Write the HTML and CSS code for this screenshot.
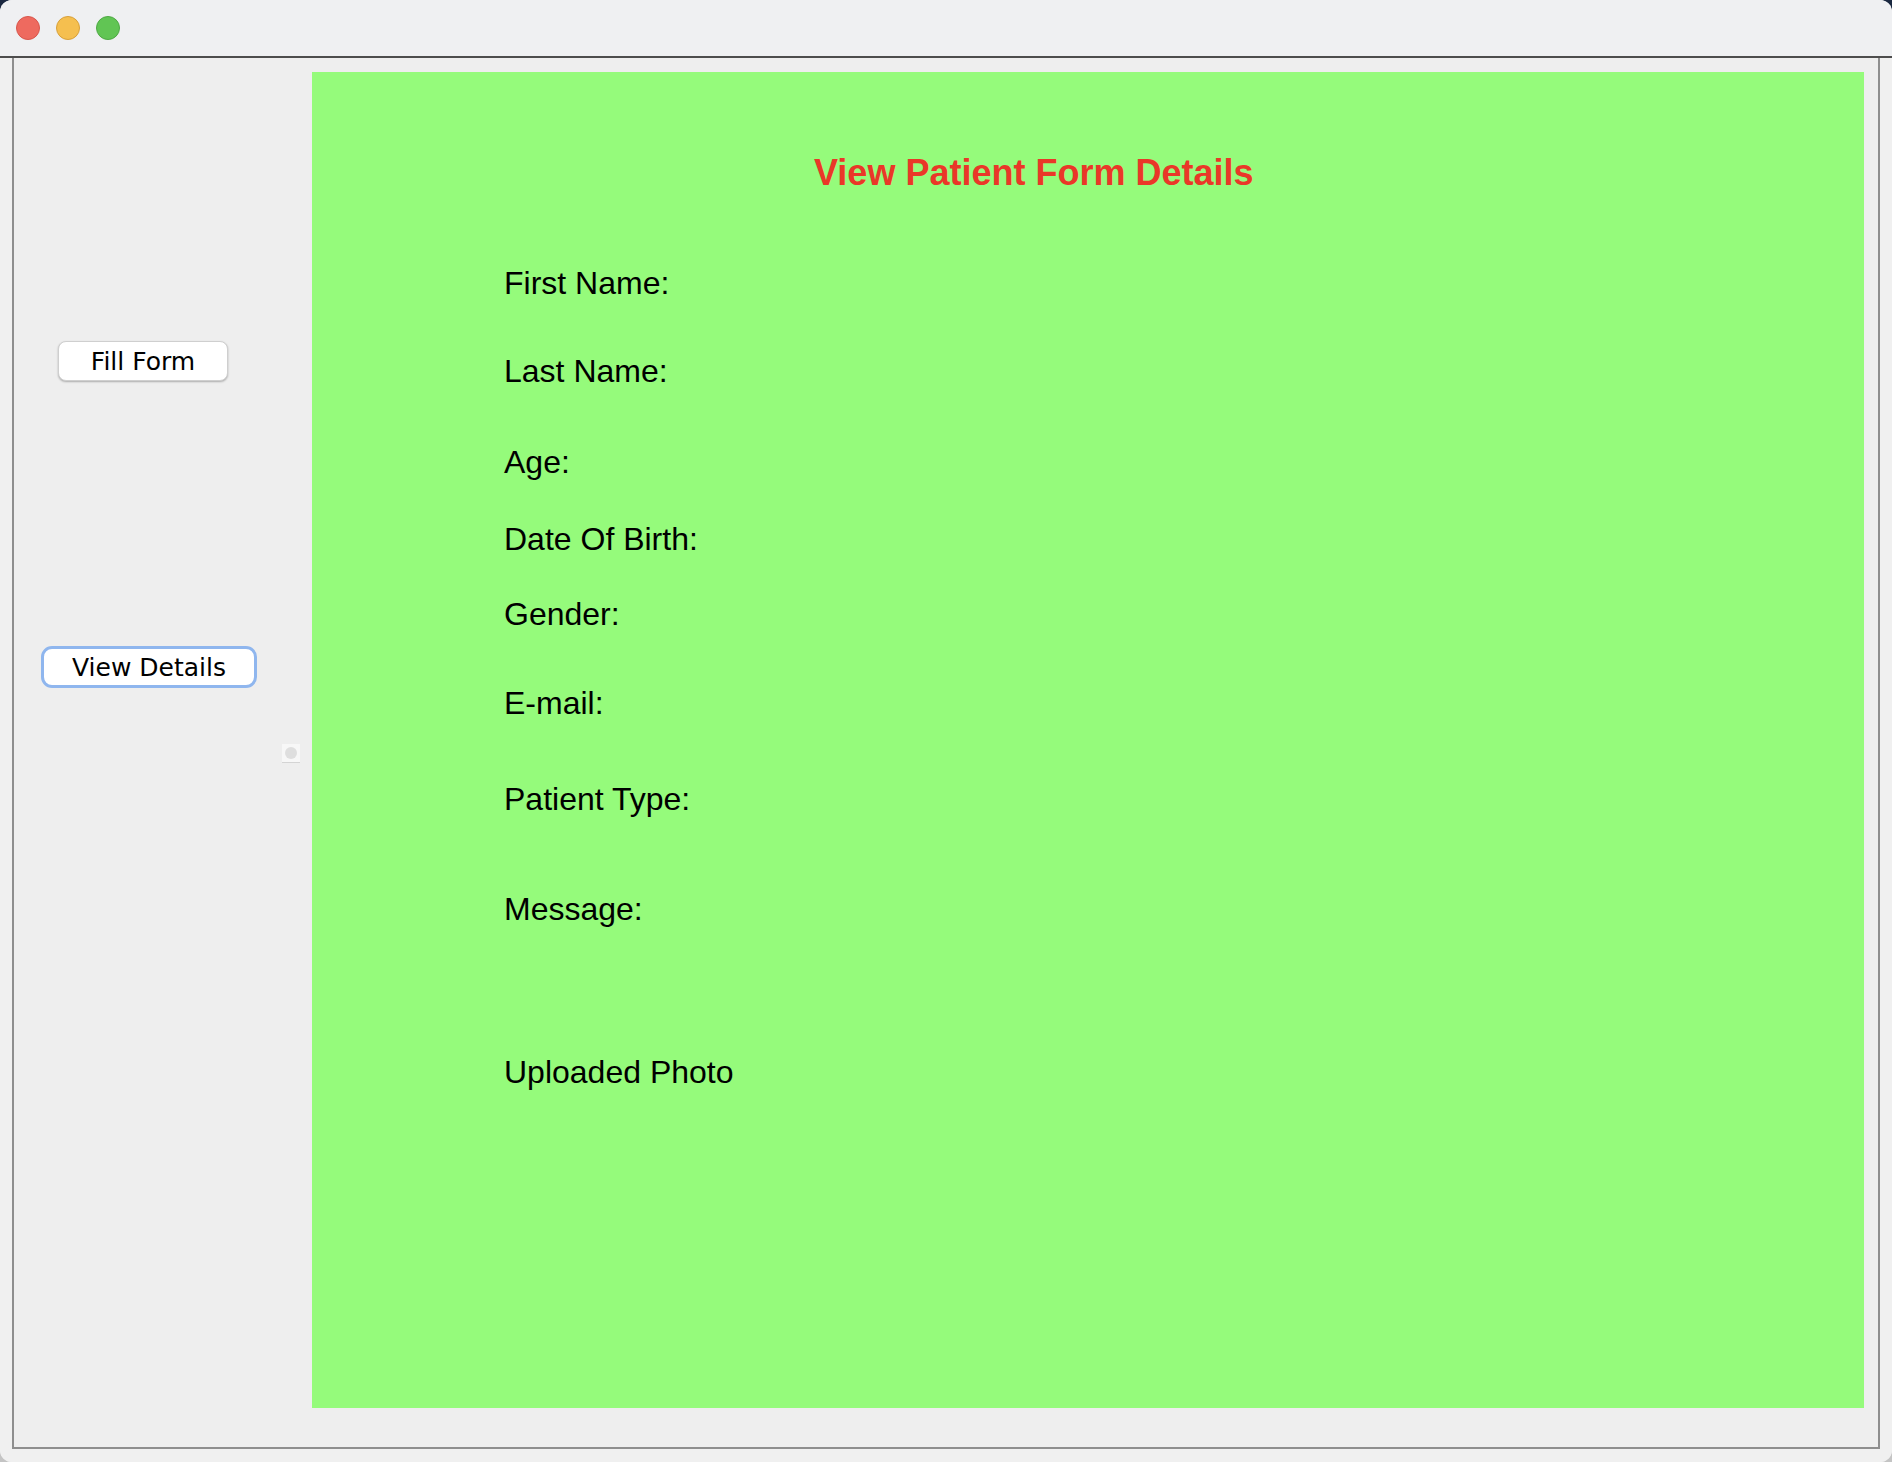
FILE: index.html
```html
<!DOCTYPE html>
<html>
<head>
<meta charset="utf-8">
<link rel="stylesheet" href="styles.css">
</head>
<body>
<div class="window">
  <div class="titlebar">
    <span class="light light-red"></span>
    <span class="light light-yellow"></span>
    <span class="light light-green"></span>
  </div>
  <div class="frame">
    <div class="sidebar">
      <button class="btn btn-fill">Fill Form</button>
      <button class="btn btn-view">View Details</button>
      <div class="knob"><span class="knob-dot"></span></div>
    </div>
    <div class="panel">
      <h1 class="title">View Patient Form Details</h1>
      <div class="label row-first">First Name:</div>
      <div class="label row-last">Last Name:</div>
      <div class="label row-age">Age:</div>
      <div class="label row-dob">Date Of Birth:</div>
      <div class="label row-gender">Gender:</div>
      <div class="label row-email">E-mail:</div>
      <div class="label row-type">Patient Type:</div>
      <div class="label row-message">Message:</div>
      <div class="label row-photo">Uploaded Photo</div>
    </div>
  </div>
  <div class="window-foot"></div>
</div>
</body>
</html>
```

FILE: styles.css
```css
html, body {
  margin: 0;
  padding: 0;
}
body {
  width: 1892px;
  height: 1462px;
  overflow: hidden;
  background: linear-gradient(to bottom, #1a2840 0, #1a2840 50%, #c4c4c4 50%, #c4c4c4 100%);
  font-family: "Liberation Sans", Arial, sans-serif;
}
.window {
  width: 1892px;
  height: 1462px;
  border-radius: 12px;
  overflow: hidden;
  background: #f0f0f0;
  display: flex;
  flex-direction: column;
}
.titlebar {
  height: 56px;
  flex: none;
  background: #eff0f2;
  border-bottom: 2px solid #4d4d4d;
  display: flex;
  align-items: center;
  gap: 16px;
  padding-left: 16px;
  box-sizing: content-box;
}
.light {
  width: 22px;
  height: 22px;
  border-radius: 50%;
  border: 1px solid transparent;
}
.light-red { background: #ee6a5f; border-color: #d8564c; }
.light-yellow { background: #f5bf4f; border-color: #d8a03a; }
.light-green { background: #61c554; border-color: #4ea944; }

.frame {
  flex: none;
  margin-left: 12px;
  width: 1864px;
  height: 1389px;
  border: 2px solid #8e8e8e;
  border-top: none;
  background: #eeeeee;
  display: flex;
}
.sidebar {
  width: 298px;
  flex: none;
  display: flex;
  flex-direction: column;
  align-items: flex-start;
}
.btn {
  font-family: "DejaVu Sans", "Lucida Grande", Verdana, sans-serif;
  font-size: 25px;
  color: #000;
  background: #ffffff;
  padding: 0;
  cursor: default;
}
.btn-fill {
  margin-top: 283px;
  margin-left: 44px;
  width: 170px;
  height: 40px;
  border: 1px solid #cfcfcf;
  border-radius: 8px;
  box-shadow: 0 1px 2px rgba(0, 0, 0, 0.28);
}
.btn-view {
  margin-top: 265px;
  margin-left: 27px;
  width: 216px;
  height: 42px;
  border: 3px solid #8fb6ee;
  border-radius: 11px;
}
.knob {
  margin-top: 56px;
  margin-left: 268px;
  width: 18px;
  height: 18px;
  background: #f7f7f7;
  border-bottom: 1px solid #d4d4d4;
  display: flex;
  align-items: center;
  justify-content: center;
}
.knob-dot {
  width: 12px;
  height: 12px;
  border-radius: 50%;
  background: #dedede;
}
.panel {
  margin-top: 14px;
  width: 1552px;
  height: 1336px;
  background: #95fb7b;
  display: flex;
  flex-direction: column;
  padding-left: 192px;
  box-sizing: border-box;
}
.title {
  margin: 81px 0 0 310px;
  font-size: 36px;
  line-height: 40px;
  font-weight: bold;
  color: #ea3728;
  white-space: nowrap;
}
.label {
  font-size: 32px;
  line-height: 36px;
  color: #000;
  white-space: nowrap;
}
.row-first { margin-top: 72px; }
.row-last { margin-top: 52px; }
.row-age { margin-top: 55px; }
.row-dob { margin-top: 41px; }
.row-gender { margin-top: 39px; }
.row-email { margin-top: 53px; }
.row-type { margin-top: 60px; }
.row-message { margin-top: 74px; }
.row-photo { margin-top: 127px; }
.window-foot {
  flex: 1;
  background: #f0f0f0;
}
```
